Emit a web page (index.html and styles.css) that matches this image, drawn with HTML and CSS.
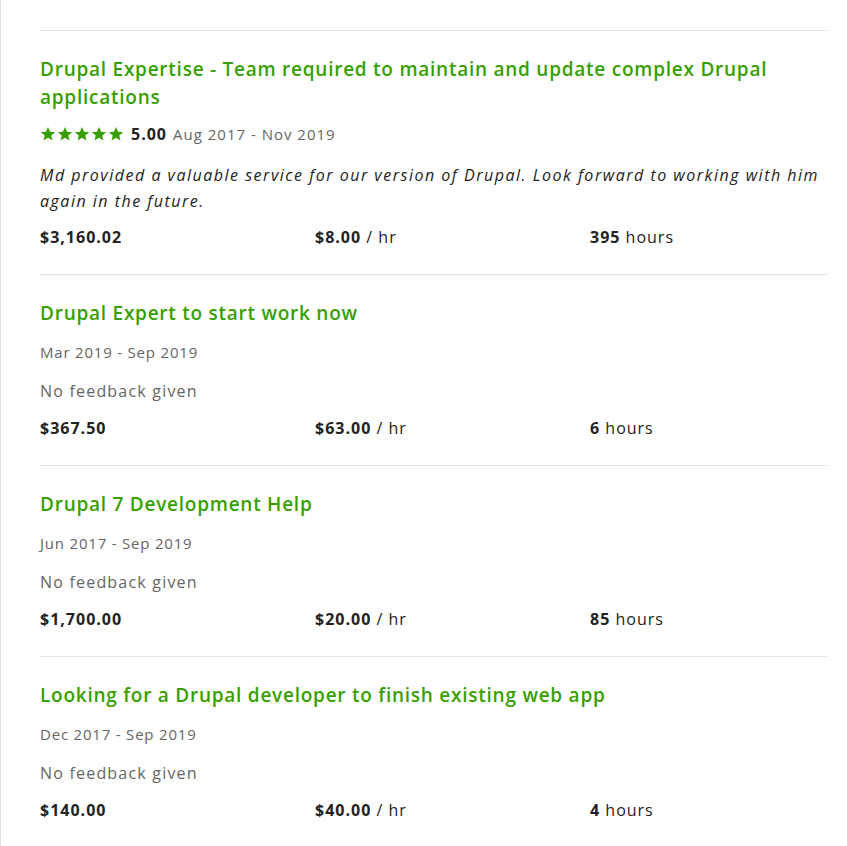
FILE: index.html
```html
<!DOCTYPE html>
<html lang="en">
<head>
<meta charset="utf-8">
<title>Work history</title>
<link rel="stylesheet" href="styles.css">
</head>
<body>
<div class="page">
  <ul class="jobs">
    <li class="job">
      <h3 class="job-title">Drupal Expertise - Team required to maintain and update complex Drupal applications</h3>
      <div class="meta">
        <span class="stars" aria-label="5 stars">
          <svg viewBox="0 0 24 24"><path d="M12 1.5l3.1 7.1 7.7.6-5.9 5 1.8 7.6L12 17.8l-6.7 4 1.8-7.6-5.9-5 7.7-.6z"/></svg><svg viewBox="0 0 24 24"><path d="M12 1.5l3.1 7.1 7.7.6-5.9 5 1.8 7.6L12 17.8l-6.7 4 1.8-7.6-5.9-5 7.7-.6z"/></svg><svg viewBox="0 0 24 24"><path d="M12 1.5l3.1 7.1 7.7.6-5.9 5 1.8 7.6L12 17.8l-6.7 4 1.8-7.6-5.9-5 7.7-.6z"/></svg><svg viewBox="0 0 24 24"><path d="M12 1.5l3.1 7.1 7.7.6-5.9 5 1.8 7.6L12 17.8l-6.7 4 1.8-7.6-5.9-5 7.7-.6z"/></svg><svg viewBox="0 0 24 24"><path d="M12 1.5l3.1 7.1 7.7.6-5.9 5 1.8 7.6L12 17.8l-6.7 4 1.8-7.6-5.9-5 7.7-.6z"/></svg>
        </span>
        <strong class="score">5.00</strong>
        <span class="dates">Aug 2017 - Nov 2019</span>
      </div>
      <p class="feedback quote">Md provided a valuable service for our version of Drupal. Look forward to working with him again in the future.</p>
      <div class="stats">
        <div><strong>$3,160.02</strong></div>
        <div><strong>$8.00</strong> / hr</div>
        <div><strong>395</strong> hours</div>
      </div>
    </li>
    <li class="job">
      <h3 class="job-title">Drupal Expert to start work now</h3>
      <div class="meta"><span class="dates">Mar 2019 - Sep 2019</span></div>
      <p class="feedback">No feedback given</p>
      <div class="stats">
        <div><strong>$367.50</strong></div>
        <div><strong>$63.00</strong> / hr</div>
        <div><strong>6</strong> hours</div>
      </div>
    </li>
    <li class="job">
      <h3 class="job-title">Drupal 7 Development Help</h3>
      <div class="meta"><span class="dates">Jun 2017 - Sep 2019</span></div>
      <p class="feedback">No feedback given</p>
      <div class="stats">
        <div><strong>$1,700.00</strong></div>
        <div><strong>$20.00</strong> / hr</div>
        <div><strong>85</strong> hours</div>
      </div>
    </li>
    <li class="job">
      <h3 class="job-title">Looking for a Drupal developer to finish existing web app</h3>
      <div class="meta"><span class="dates">Dec 2017 - Sep 2019</span></div>
      <p class="feedback">No feedback given</p>
      <div class="stats">
        <div><strong>$140.00</strong></div>
        <div><strong>$40.00</strong> / hr</div>
        <div><strong>4</strong> hours</div>
      </div>
    </li>
  </ul>
</div>
</body>
</html>
```
FILE: styles.css
```css
* { box-sizing: border-box; }
html, body { margin: 0; padding: 0; background: #fff; }
body {
  font-family: "Open Sans", "Liberation Sans", sans-serif;
  color: #222;
}
.page {
  border-left: 1px solid #e0e0e0;
  min-height: 846px;
  padding: 30px 20px 0 39px;
}
.jobs { list-style: none; margin: 0; padding: 0; }
.job {
  border-top: 1px solid #e4e4e4;
  padding: 24px 0 24px;
}
.job-title {
  margin: 0 0 12px;
  font-size: 19px;
  line-height: 28px;
  font-weight: 600;
  letter-spacing: 0.75px;
  color: #37a000;
}
.meta {
  display: flex;
  align-items: center;
  font-size: 15px;
  line-height: 26px;
  letter-spacing: 0.8px;
  color: #656565;
}
.meta-rated { margin-top: -2px; }
.stars { display: inline-flex; gap: 1px; margin-right: 7px; }
.stars svg { width: 16px; height: 16px; fill: #37a000; }
.score { color: #222; font-weight: 700; font-size: 16px; letter-spacing: 1px; margin-right: 6px; }
.meta .stars + .score + .dates { letter-spacing: 1px; }
.feedback {
  margin: 13px 0 11px;
  font-size: 16px;
  line-height: 26px;
  letter-spacing: 1.2px;
  color: #656565;
}
.feedback.quote { font-style: italic; color: #222; letter-spacing: 1.5px; margin: 15px 0 10px; }
.stats {
  display: grid;
  grid-template-columns: 275px 275px 1fr;
  font-size: 16px;
  line-height: 26px;
  letter-spacing: 1px;
  color: #222;
}
.stats strong { font-weight: 700; }
.job:first-child .meta { margin-top: -2px; }
```
